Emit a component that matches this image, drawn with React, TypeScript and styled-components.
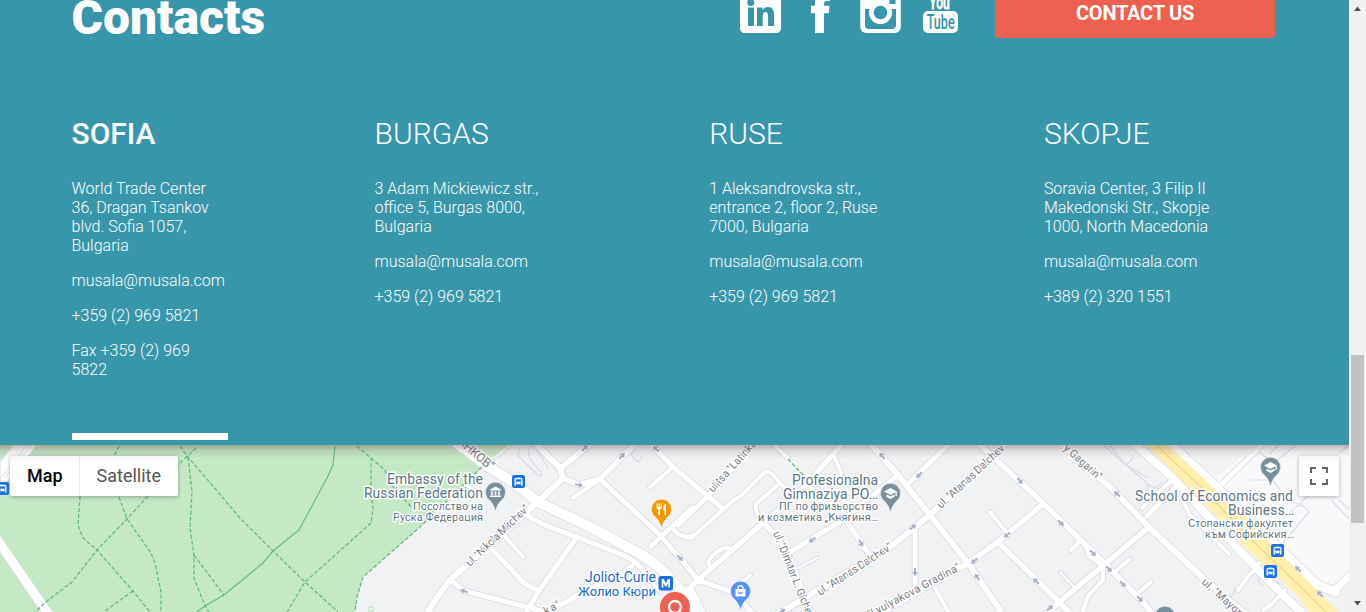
import React from "react";
import styled, { createGlobalStyle } from "styled-components";

const GlobalStyle = createGlobalStyle`
  * { box-sizing: border-box; }
  body { margin: 0; overflow: hidden; font-family: Roboto, "Liberation Sans", sans-serif; }
`;

const Page = styled.div`
  display: flex;
  width: 1366px;
  height: 612px;
  overflow: hidden;
`;

const Main = styled.main`
  display: flex;
  flex-direction: column;
  width: 1349px;
`;

const ContactSection = styled.section`
  height: 445px;
  padding: 0 74px 0 71.5px;
  background: #3896ab;
  color: #fff;
`;

const Header = styled.header`
  display: flex;
  align-items: flex-start;
  margin-top: -11px;
`;

const Title = styled.h2`
  flex: 1;
  margin: 0;
  padding-top: 1px;
  font-size: 48px;
  line-height: 56px;
  font-weight: 900;
`;

const SocialLinks = styled.nav`
  display: flex;
  gap: 19px;
  margin: 3px 34px 0 0;
`;

const SocialLink = styled.a`
  display: block;
  width: 41px;
  height: 41px;
  svg { display: block; }
`;

const ContactButton = styled.button`
  width: 280px;
  height: 49px;
  border: 0;
  border-radius: 4px;
  background: #ee604f;
  color: #fff;
  font: 700 20px/49px Roboto, sans-serif;
  letter-spacing: -0.25px;
  padding: 0;
`;

const Offices = styled.div`
  display: grid;
  grid-template-columns: 303px 334.7px 334.7px 1fr;
  margin-top: 70px;
`;

const Office = styled.article<{ $width: number; $active?: boolean }>`
  width: ${(p) => p.$width}px;
  height: 324px;
  border-bottom: ${(p) => (p.$active ? "7px solid #fff" : "0")};
`;

const City = styled.h3<{ $active?: boolean }>`
  margin: 0 0 27px;
  font-size: 30px;
  line-height: 36px;
  font-weight: ${(p) => (p.$active ? 500 : 300)};
`;

const Line = styled.p`
  margin: 0 0 16px;
  font-size: 16px;
  line-height: 19px;
  font-weight: 300;
`;

const MapSection = styled.section`
  position: relative;
  height: 167px;
  background: #f1f2f4;
  overflow: hidden;
`;

const MapDrawing = styled.svg`
  display: block;
`;

const TopShade = styled.div`
  position: absolute;
  inset: 0 0 auto 0;
  height: 13px;
  background: linear-gradient(rgba(75, 45, 55, 0.34), rgba(75, 55, 65, 0.13) 45%, rgba(75, 60, 70, 0));
`;

const MapTypes = styled.div`
  position: absolute;
  left: 10px;
  top: 11px;
  display: flex;
  border-radius: 2px;
  background: linear-gradient(#f6f6f6, #fff 8px);
  box-shadow: 0 1px 4px rgba(0, 0, 0, 0.3);
`;

const MapType = styled.button<{ $selected?: boolean }>`
  height: 40px;
  padding: 0 ${(p) => (p.$selected ? 16 : 17)}px 0 17px;
  border: 0;
  border-left: ${(p) => (p.$selected ? "0" : "1px solid #ebebeb")};
  background: transparent;
  color: ${(p) => (p.$selected ? "#000" : "#565656")};
  font: ${(p) => (p.$selected ? 500 : 400)} 18px/40px Roboto, sans-serif;
`;

const FullscreenButton = styled.button`
  position: absolute;
  left: 1299px;
  top: 11px;
  width: 40px;
  height: 40px;
  padding: 11px;
  border: 0;
  border-radius: 2px;
  background: linear-gradient(#f6f6f6, #fff 8px);
  box-shadow: 0 1px 4px rgba(0, 0, 0, 0.3);
  svg { display: block; }
`;

const Scrollbar = styled.aside`
  display: flex;
  flex-direction: column;
  align-items: center;
  width: 17px;
  height: 612px;
  background: #f1f1f1;
`;

const ScrollArrow = styled.svg`
  display: block;
  width: 17px;
  height: 17px;
  flex: none;
`;

const ScrollTrack = styled.div`
  flex: 1;
  padding-top: 338px;
`;

const ScrollThumb = styled.div`
  width: 13px;
  height: 168px;
  background: #c1c1c1;
`;

type Road = [string, number];

const roads: Road[] = [
  // park side and boulevard
  ["M-4 538L49 615", 9],
  ["M458 443L487 466L513 482L538 502L590 527L633 550Q652 560 662 570L683 592L700 616", 10],
  ["M443 432L462 448", 9],
  // around ul. Nikola Mirchev
  ["M427 614Q434 600 450 580L538 502L563 478L560 468L535 443", 6],
  ["M561 468L590 444", 6],
  ["M563 478L579 485L600 479L627 452L637 443", 5.5],
  ["M600 479L573 498", 4],
  ["M600 479L660 535L688 568L700 582", 5],
  ["M651 546L692 508", 5],
  ["M673 529Q681 538 692 538", 4],
  ["M651 444L673 467L722 508", 5],
  ["M673 467L650 487", 4],
  ["M503 534L523 557", 4],
  ["M490 547L520 579Q526 586 538 590", 5],
  ["M528 515Q533 522 577 537L625 556Q638 562 645 573L660 590", 5],
  ["M577 537L538 592L526 613", 5],
  ["M450 580L465 591L530 608L553 614", 5],
  ["M632 566L620 575L585 591L545 614", 5],
  // ulitsa Latinka and the blocks east of it
  ["M678 525L707 497L755 443", 5],
  ["M676 533Q689 540 697 533L735 499L741 496L765 472Q769 469 780 483L795 497", 4],
  ["M780 483L756 504Q754 510 763 523", 4],
  ["M678 599L698 580L763 523L795 497L842 444", 5.5],
  ["M772 443L788 458", 4],
  ["M833 454L841 472L838 478", 4],
  ["M898 475L843 520L790 552", 5],
  ["M843 516L873 560", 5],
  ["M868 441L898 475L930 515L968 563L1004 616", 6],
  ["M908 484L950 443", 5],
  ["M978 443L1043 503L1106 565L1143 602L1154 616", 5.5],
  ["M776 615L893 545L930 515L1006 443", 6],
  ["M915 527L915 593", 5],
  ["M880 614L968 563L998 542L1043 504", 5.5],
  ["M990 512L1007 533", 4],
  ["M998 542L1059 602L1073 616", 5.5],
  ["M935 588L949 613", 4],
  ["M763 523Q780 537 790 558L811 615", 5],
  ["M676 553L698 580L735 593L753 614", 5],
  ["M737 587L750 575", 4],
  ["M690 587L704 614", 5],
  ["M709 565Q706 558 722 549Q728 546 733 550", 4],
  ["M798 568L817 558", 2.5],
  // ul. Yuriy Gagarin and ul. Mayor
  ["M1060 443L1113 490L1149 527L1203 578L1249 617", 6],
  ["M1149 527L1104 565L1059 602L1044 616", 5.5],
  ["M1147 516L1176 487", 5],
  ["M1142 508L1174 478", 4],
  ["M1071 550L1079 542", 4],
  ["M1087 549L1089 556L1103 567L1103 580L1088 596L1082 614", 4],
  ["M1113 573L1130 559", 4],
  ["M1138 593L1151 582", 4],
  ["M1060 572L1073 586", 2.5],
  ["M1181 497L1190 515L1229 554", 4],
  // highway lanes
  ["M1132 442L1172 477L1240 551L1270 582L1305 616", 8],
  ["M1167 441L1213 484L1270 540L1318 585L1336 592", 9],
  ["M1218 488L1264 443", 5],
  ["M1333 592L1354 571", 7],
  ["M1259 563L1254 571L1250 574L1238 590", 4],
  ["M1285 590L1271 605L1263 610", 4],
];

const outlines = [
  "M520 447L518 456L538 475Q542 478 541 472L530 459L528 449Q532 443 536 449L549 469",
  "M636 446L631 455L638 462L643 456",
  "M1104 446L1147 483Q1150 487 1145 491",
  "M1110 446L1126 465L1148 478M1126 465L1134 457",
  "M1146 484L1159 489L1172 476M1150 491L1163 482",
  "M1250 480L1272 480L1290 502Q1304 504 1309 512L1283 543",
  "M1257 451L1281 467M1274 463L1296 445M1269 454L1280 444",
  "M1339 453L1349 445M1339 500L1349 509M1331 500L1349 519M1309 495L1291 512",
  "M1236 588L1227 604M1263 586Q1255 580 1259 576L1284 585",
  "M493 459Q500 459 511 446",
];

const trails = [
  "M119 446L113 458M119 497L127 519L151 553L155 563L161 592L161 612",
  "M80 496L78 525L83 538L97 550L133 591L150 612",
  "M196 448L178 465M148 496L127 519L97 550L72 582L47 601L35 612",
  "M133 591L105 611",
  "M180 446L188 457L240 518L273 551L305 582L338 612",
  "M188 457L192 492L190 528L194 555L194 578L205 606L209 612",
  "M194 555L224 595",
  "M371 523L305 582L287 612",
  "M357 446L371 458L371 492L373 508L371 523",
  "M371 458L385 470L390 483L412 508",
  "M482 467L420 527L363 577L357 597L355 612",
  "M788 459L805 477",
];

const arrows: [number, number, number][] = [
  [585, 448, -42], [622, 456, -48], [579, 485, 12], [656, 449, 220], [680, 558, 45], [464, 591, 200],
  [882, 456, 230], [919, 475, 132], [1020, 481, 48], [812, 540, 148], [861, 543, 60],
  [913, 527, -38], [915, 572, 90], [1007, 535, 143], [974, 561, 143], [977, 577, 238],
  [782, 611, -30], [1117, 494, 222], [1061, 523, 45], [1093, 553, 45], [1109, 569, 45],
  [1123, 584, 45], [1140, 599, 45], [1036, 581, 225], [1050, 608, -40], [1298, 569, 225], [1320, 594, 225],
];

interface LabelProps {
  x: number;
  y: number;
  width: number;
  size: number;
  color?: string;
  rotate?: number;
  children: string;
}

const MapText = styled.text`
  font-family: Roboto, "Liberation Sans", sans-serif;
  paint-order: stroke;
  stroke: #fff;
  stroke-width: 3px;
  stroke-linejoin: round;
`;

const Label = ({ x, y, width, size, color = "#5b7683", rotate = 0, children }: LabelProps) => (
  <MapText x={x} y={y} fontSize={size} fill={color} textLength={width} transform={`rotate(${rotate} ${x} ${y})`}>
    {children}
  </MapText>
);

const street = "#777b80";

const BusStop = ({ x, y }: { x: number; y: number }) => (
  <g transform={`translate(${x} ${y})`}>
    <rect x="-6.5" y="-6.5" width="13" height="13" rx="2" fill="#1a73e8" />
    <path d="M-4 4V-2.2Q-4-4 0-4T4-2.2V4H2.4V2.8H-2.4V4Z" fill="#fff" />
    <path d="M-2.8-2.2H2.8V.2H-2.8Z" fill="#1a73e8" />
    <circle cx="-2.2" cy="1.6" r=".7" fill="#1a73e8" />
    <circle cx="2.2" cy="1.6" r=".7" fill="#1a73e8" />
  </g>
);

const Pin = ({ x, y, color, children }: { x: number; y: number; color: string; children: React.ReactNode }) => (
  <g transform={`translate(${x} ${y})`}>
    <path d="M0 19.5C-1.2 14-3 11.4-6 8.2A10 10 0 1 1 6 8.2C3 11.4 1.2 14 0 19.5Z" fill={color} stroke="#fff" strokeOpacity=".6" strokeWidth=".8" />
    {children}
  </g>
);

const School = () => (
  <path d="M0-5L-6.5-1.5L0 2L5-.7V3H6.3V-1.5ZM-4 1.4V3.7L0 6L4 3.7V1.4L0 3.6Z" fill="#fff" />
);

const CityMap = () => (
  <MapDrawing width="1349" height="167" viewBox="0 445 1349 167">
    <path d="M1200 490L1262 440H1349V580L1320 590Z" fill="#f8f9fb" />
    <path d="M0 445H508L482 467L420 527L363 577L357 597L355 612H0Z" fill="#c5e8c5" />
    <path d="M13 445H37L8 481L0 489V462Z" fill="#fff" stroke="#d5dbe0" />
    <path d="M31 445L5 478M27 445L1 478" stroke="#d6dbe7" strokeWidth=".8" />
    <g fill="none" stroke="#dadce4" strokeWidth="1.2" strokeLinejoin="round">
      {outlines.map((d) => <path key={d} d={d} />)}
    </g>
    <g fill="none" stroke="#d9dbe3" strokeLinecap="round" strokeLinejoin="round">
      {roads.map(([d, w]) => <path key={d} d={d} strokeWidth={w + 1.6} />)}
    </g>
    <g fill="none" stroke="#fff" strokeLinecap="round" strokeLinejoin="round">
      {roads.map(([d, w]) => <path key={d} d={d} strokeWidth={w} />)}
    </g>
    <path d="M1146 445H1168L1216 490L1255 527L1297 570L1342 615H1312L1297 595L1250 552L1204 503Z" fill="#fff0b0" />
    <path d="M1156 445L1200 486L1249 537L1280 567L1328 614" fill="none" stroke="#f7d57c" strokeWidth="1.2" />
    <g fill="none" stroke="#5dbb78" strokeWidth="1.25">
      {trails.map((d) => <path key={d} d={d} strokeDasharray="4 2" />)}
      <path d="M335 446L333 465L327 478L299 530L273 551L263 563L224 595L205 606L197 612" strokeWidth="1.1" />
    </g>
    <circle cx="371" cy="609" r="2.6" fill="none" stroke="#c9e6cd" strokeWidth="1.5" />
    {arrows.map(([x, y, a]) => (
      <path key={`${x}-${y}`} d="M-4-1H0V-3L4.2 0L0 3V1H-4Z" fill="#aab0c8" transform={`translate(${x} ${y}) rotate(${a})`} />
    ))}

    <Label x={457} y={443} width={43} size={12.5} color={street} rotate={40}>АНКОВ“</Label>
    <Label x={470} y={567} width={83} size={11} color={street} rotate={-44}>ul. "Nikola Mirchev"</Label>
    <Label x={713} y={493} width={66} size={11} color={street} rotate={-48}>ulitsa "Latinka</Label>
    <Label x={773} y={533} width={88} size={11} color={street} rotate={68}>ul. "Dimitar L. Giche</Label>
    <Label x={820} y={596} width={87} size={11} color={street} rotate={-33}>ul. "Atanas Dalchev"</Label>
    <Label x={941} y={509} width={91} size={11} color={street} rotate={-43}>ul. "Atanas Dalchev"</Label>
    <Label x={870} y={618} width={103} size={11} color={street} rotate={-28}>"Lyulyakova Gradina"</Label>
    <Label x={1063} y={449} width={47} size={11} color={street} rotate={42}>y Gagarin"</Label>
    <Label x={1201} y={583} width={59} size={11} color={street} rotate={42}>ul. "Mayor Y</Label>
    <Label x={546} y={615} width={17} size={11} color={street} rotate={-28}>ka"</Label>

    <Label x={387} y={484} width={96} size={14}>Embassy of the</Label>
    <Label x={364} y={498} width={119} size={14}>Russian Federation</Label>
    <Label x={413} y={510} width={70} size={11}>Посолство на</Label>
    <Label x={393} y={521} width={90} size={11}>Руска Федерация</Label>
    <Label x={792} y={485} width={86} size={14}>Profesionalna</Label>
    <Label x={783} y={499} width={95} size={14}>Gimnaziya PO…</Label>
    <Label x={779} y={510} width={99} size={11}>ПГ по фризьорство</Label>
    <Label x={758} y={521} width={120} size={11}>и козметика „Княгиня…</Label>
    <Label x={1135} y={501} width={158} size={14}>School of Economics and</Label>
    <Label x={1228} y={515} width={66} size={14}>Business…</Label>
    <Label x={1188} y={527} width={105} size={11}>Стопански факултет</Label>
    <Label x={1205} y={538} width={89} size={11}>към Софийския…</Label>
    <Label x={585} y={582} width={71} size={14} color="#1a66d2">Joliot-Curie</Label>
    <Label x={578} y={596} width={78} size={13} color="#1a66d2">Жолио Кюри</Label>

    <BusStop x={518.5} y={481.5} />
    <BusStop x={2.5} y={488.5} />
    <BusStop x={1277.5} y={550.5} />
    <BusStop x={1270.5} y={571.5} />
    <rect x="658.5" y="576" width="14.5" height="14.5" rx="2.5" fill="#1a73e8" />
    <path d="M661.7 587.5V579h2.1l2 4.6 2-4.6h2.1v8.5h-1.7v-4.7l-1.7 3.8h-1.4l-1.7-3.8v4.7Z" fill="#fff" />

    <Pin x={495.5} y={492} color="#78909c">
      <path d="M-5.5-2.6L0-5.5L5.5-2.6V-1.4H-5.5ZM-4.2-.7H-2.6V3H-4.2ZM-.8-.7H.8V3H-.8ZM2.6-.7H4.2V3H2.6ZM-5.5 3.6H5.5V5H-5.5Z" fill="#fff" />
    </Pin>
    <Pin x={890.5} y={493} color="#78909c"><School /></Pin>
    <Pin x={1270.5} y={467} color="#78909c"><School /></Pin>
    <Pin x={1165} y={616} color="#78909c"><circle r="2" fill="#fff" /></Pin>
    <Pin x={661.5} y={509} color="#f29900">
      <path d="M-5-5.5V-2Q-5 0-3.1.4V6H-1.5V.4Q.4 0 .4-2V-5.5H-.7V-2H-1.7V-5.5H-2.8V-2H-3.9V-5.5ZM4.5-5.5Q1.8-4.5 1.8 0V1.2H3V6H4.5Z" fill="#fff" />
    </Pin>
    <Pin x={740.5} y={591} color="#5491f5">
      <path d="M-5-2H5V5.5H-5Z" fill="#fff" />
      <path d="M-2.4-2V-3.2Q-2.4-5.4 0-5.4T2.4-3.2V-2" fill="none" stroke="#fff" strokeWidth="1.3" />
      <path d="M-2.2.8Q0 4 2.2.8" fill="none" stroke="#5491f5" strokeWidth="1.2" />
    </Pin>
    <circle cx="675" cy="607" r="15" fill="#ee604f" />
    <circle cx="675" cy="607" r="6" fill="none" stroke="#fff" strokeWidth="2.4" />
  </MapDrawing>
);

const LinkedInIcon = () => (
  <svg width="41" height="41" viewBox="0 0 41 41">
    <rect width="41" height="41" rx="4.5" fill="#fff" />
    <circle cx="10.8" cy="10.4" r="3.5" fill="#3896ab" />
    <path d="M8 15.5H14V34H8ZM17 15.5H22.5V18Q24.3 15 28 15C32.6 15 34 18 34 23V34H28V24.5Q28 20 25.5 20Q22.7 20 22.7 24V34H17Z" fill="#3896ab" />
  </svg>
);

const FacebookIcon = () => (
  <svg width="41" height="41" viewBox="0 0 41 41">
    <path d="M15 41V21.3H11V13.7H15V9C15 3 18 0 24 0H30V9H26.5Q24 9 24 11.4V13.7H29.5L28.7 21.3H24V41Z" fill="#fff" />
  </svg>
);

const InstagramIcon = () => (
  <svg width="41" height="41" viewBox="0 0 41 41">
    <rect x=".3" width="40.5" height="41" rx="6" fill="#fff" />
    <path d="M5 17H36V33Q36 37 32 37H9Q5 37 5 33ZM29.5 4.5H35.5V12H29.5Z" fill="#3896ab" />
    <circle cx="20.5" cy="20.5" r="11.5" fill="#fff" />
    <circle cx="20.5" cy="20.5" r="6.8" fill="#3896ab" />
  </svg>
);

const IconWord = styled.text`
  font-family: Roboto, sans-serif;
  font-weight: 500;
`;

const YouTubeIcon = () => (
  <svg width="41" height="41" viewBox="0 0 41 41">
    <IconWord transform="translate(9.3 16.5) scale(.6 1)" fontSize="20" fill="#fff" stroke="#fff" strokeWidth=".8">You</IconWord>
    <rect x="3" y="19" width="35" height="22" rx="5" fill="#fff" />
    <IconWord transform="translate(6.7 37.3) scale(.63 1)" fontSize="20" fill="#3896ab">Tube</IconWord>
  </svg>
);

const offices = [
  { city: "SOFIA", width: 156, active: true, lines: ["World Trade Center 36, Dragan Tsankov blvd. Sofia 1057, Bulgaria", "musala@musala.com", "+359 (2) 969 5821", "Fax +359 (2) 969 5822"] },
  { city: "BURGAS", width: 173, lines: ["3 Adam Mickiewicz str., office 5, Burgas 8000, Bulgaria", "musala@musala.com", "+359 (2) 969 5821"] },
  { city: "RUSE", width: 173, lines: ["1 Aleksandrovska str., entrance 2, floor 2, Ruse 7000, Bulgaria", "musala@musala.com", "+359 (2) 969 5821"] },
  { city: "SKOPJE", width: 173, lines: ["Soravia Center, 3 Filip II Makedonski Str., Skopje 1000, North Macedonia", "musala@musala.com", "+389 (2) 320 1551"] },
];

export default function App() {
  return (
    <Page>
      <GlobalStyle />
      <Main>
        <ContactSection>
          <Header>
            <Title>Contacts</Title>
            <SocialLinks>
              <SocialLink><LinkedInIcon /></SocialLink>
              <SocialLink><FacebookIcon /></SocialLink>
              <SocialLink><InstagramIcon /></SocialLink>
              <SocialLink><YouTubeIcon /></SocialLink>
            </SocialLinks>
            <ContactButton>CONTACT US</ContactButton>
          </Header>
          <Offices>
            {offices.map((o) => (
              <Office key={o.city} $width={o.width} $active={o.active}>
                <City $active={o.active}>{o.city}</City>
                {o.lines.map((l) => <Line key={l}>{l}</Line>)}
              </Office>
            ))}
          </Offices>
        </ContactSection>
        <MapSection>
          <CityMap />
          <TopShade />
          <MapTypes>
            <MapType $selected>Map</MapType>
            <MapType>Satellite</MapType>
          </MapTypes>
          <FullscreenButton>
            <svg width="18" height="18" viewBox="0 0 18 18">
              <path d="M1 6V1H6M12 1H17V6M17 12V17H12M6 17H1V12" fill="none" stroke="#666" strokeWidth="2.2" />
            </svg>
          </FullscreenButton>
        </MapSection>
      </Main>
      <Scrollbar>
        <ScrollArrow viewBox="0 0 17 17"><path d="M8.5 6.5L12 11H5Z" fill="#505050" /></ScrollArrow>
        <ScrollTrack><ScrollThumb /></ScrollTrack>
        <ScrollArrow viewBox="0 0 17 17"><path d="M5 6H12L8.5 10.5Z" fill="#505050" /></ScrollArrow>
      </Scrollbar>
    </Page>
  );
}
